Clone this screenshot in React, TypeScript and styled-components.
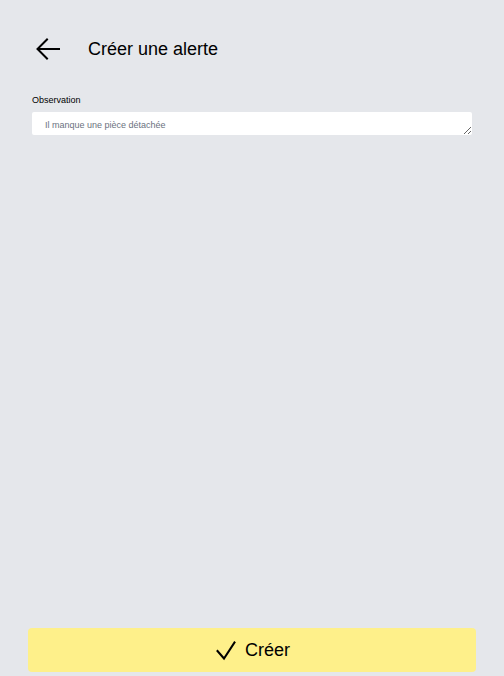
import React from "react";
import styled, { createGlobalStyle } from "styled-components";

const GlobalStyle = createGlobalStyle`
  html, body {
    margin: 0;
    padding: 0;
    background: #e5e7eb;
    font-family: "Liberation Sans", Arial, sans-serif;
  }
  * { box-sizing: border-box; }
`;

const Page = styled.div`
  min-height: 676px;
  display: flex;
  flex-direction: column;
  background: #e5e7eb;
`;

const Header = styled.header`
  display: flex;
  align-items: center;
  gap: 24px;
  padding: 33px 32px 0 32px;
  height: 65px;
`;

const BackButton = styled.button`
  width: 32px;
  height: 32px;
  padding: 0;
  border: none;
  background: transparent;
  display: flex;
  align-items: center;
  justify-content: center;
  cursor: pointer;
  color: #000;
`;

const Title = styled.h1`
  margin: 0;
  font-size: 18px;
  font-weight: 400;
  color: #000;
  line-height: 22px;
`;

const Form = styled.div`
  display: flex;
  flex-direction: column;
  padding: 30px 32px 0 32px;
`;

const Label = styled.label`
  display: block;
  font-size: 9px;
  line-height: 11px;
  color: #000;
  margin-bottom: 6px;
`;

const TextArea = styled.textarea`
  display: block;
  width: 100%;
  height: 23px;
  border: none;
  border-radius: 2px;
  background: #fff;
  padding: 8px 12px 4px 13px;
  font-family: "Liberation Sans", Arial, sans-serif;
  font-size: 9px;
  line-height: 11px;
  color: #111;
  resize: vertical;
  overflow: hidden;
  outline: none;
  &::placeholder {
    color: #6b7280;
  }
`;

const Footer = styled.div`
  margin-top: auto;
  padding: 0 28px 4px 28px;
`;

const SubmitButton = styled.button`
  width: 100%;
  height: 44px;
  border: none;
  border-radius: 4px;
  background: #fef08a;
  display: flex;
  align-items: center;
  justify-content: center;
  gap: 7px;
  padding: 0;
  font-family: "Liberation Sans", Arial, sans-serif;
  font-size: 18px;
  color: #000;
  cursor: pointer;
`;

const ArrowIcon = () => (
  <svg width="32" height="32" viewBox="0 0 32 32" fill="none" stroke="currentColor" strokeWidth="2" strokeLinecap="square" strokeLinejoin="miter">
    <path d="M6 16H27" />
    <path d="M15 6.5L5.5 16L15 25.5" />
  </svg>
);

const CheckIcon = () => (
  <svg width="24" height="24" viewBox="0 0 24 24" fill="none" stroke="currentColor" strokeWidth="2" strokeLinecap="square" strokeLinejoin="miter">
    <path d="M3.5 13L10 20.5L20.5 4.5" />
  </svg>
);

export default function App() {
  return (
    <>
      <GlobalStyle />
      <Page>
        <Header>
          <BackButton aria-label="Retour">
            <ArrowIcon />
          </BackButton>
          <Title>Créer une alerte</Title>
        </Header>
        <Form>
          <Label htmlFor="obs">Observation</Label>
          <TextArea id="obs" rows={1} placeholder="Il manque une pièce détachée" />
        </Form>
        <Footer>
          <SubmitButton>
            <CheckIcon />
            <span>Créer</span>
          </SubmitButton>
        </Footer>
      </Page>
    </>
  );
}
